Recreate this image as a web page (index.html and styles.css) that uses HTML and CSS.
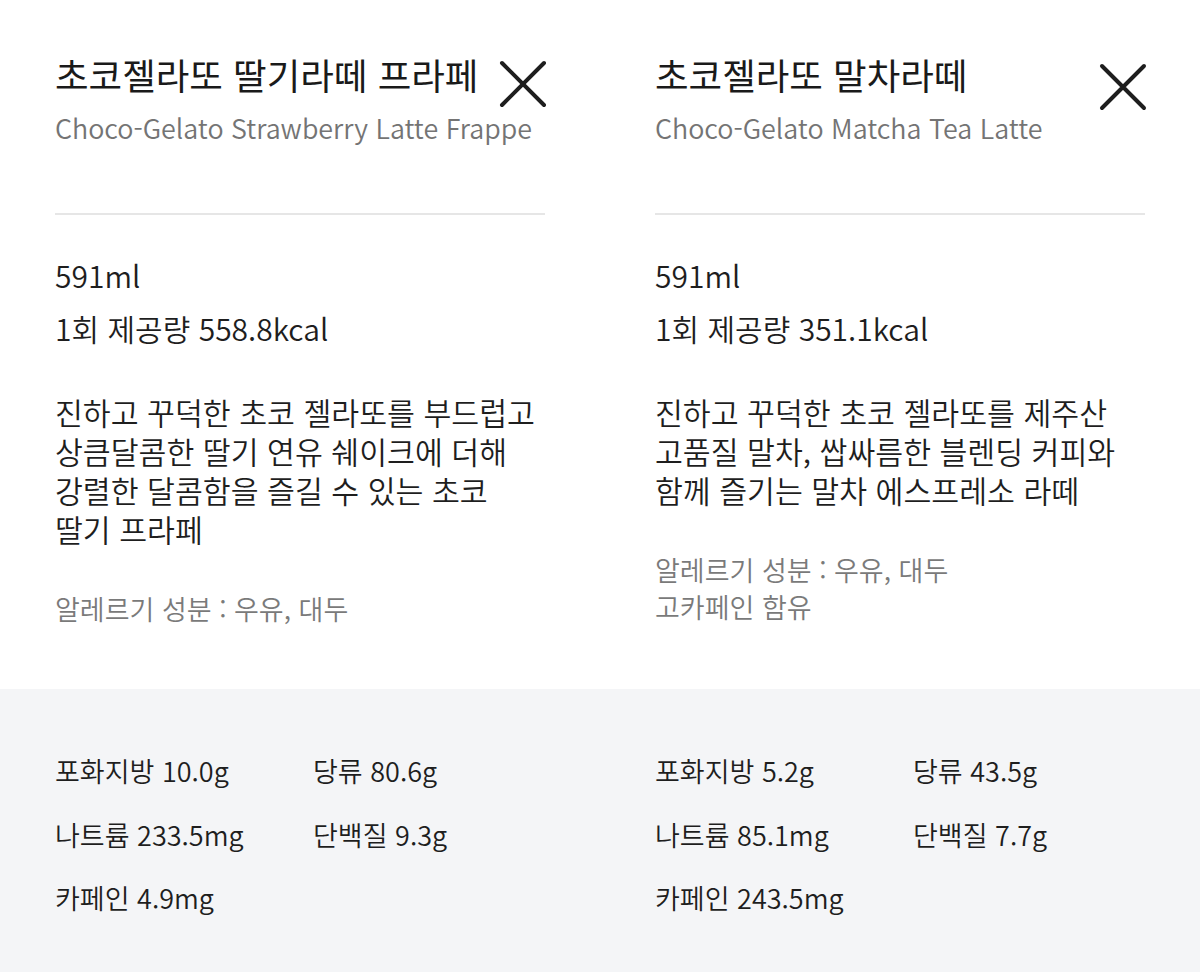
FILE: index.html
```html
<!DOCTYPE html>
<html lang="ko">
<head>
<meta charset="utf-8">
<link rel="stylesheet" href="styles.css">
</head>
<body>
<div class="page">
  <section class="panel">
    <header class="head">
      <h1 class="title">초코젤라또 딸기라떼 프라페</h1>
      <button class="close" aria-label="닫기">
        <svg viewBox="0 0 48 48" width="48" height="48"><path d="M3 3 L45 45 M45 3 L3 45" stroke="#1e1e1e" stroke-width="4" stroke-linecap="round" fill="none"/></svg>
      </button>
      <p class="subtitle">Choco-Gelato Strawberry Latte Frappe</p>
    </header>
    <hr class="divider">
    <div class="specs">
      <p>591ml</p>
      <p>1회 제공량 558.8kcal</p>
    </div>
    <p class="desc">진하고 꾸덕한 초코 젤라또를 부드럽고<br>상큼달콤한 딸기 연유 쉐이크에 더해<br>강렬한 달콤함을 즐길 수 있는 초코<br>딸기 프라페</p>
    <div class="notes">
      <p>알레르기 성분 : 우유, 대두</p>
    </div>
  </section>
  <section class="panel">
    <header class="head">
      <h1 class="title">초코젤라또 말차라떼</h1>
      <button class="close close-low" aria-label="닫기">
        <svg viewBox="0 0 48 48" width="48" height="48"><path d="M3 3 L45 45 M45 3 L3 45" stroke="#1e1e1e" stroke-width="4" stroke-linecap="round" fill="none"/></svg>
      </button>
      <p class="subtitle">Choco-Gelato Matcha Tea Latte</p>
    </header>
    <hr class="divider">
    <div class="specs">
      <p>591ml</p>
      <p>1회 제공량 351.1kcal</p>
    </div>
    <p class="desc">진하고 꾸덕한 초코 젤라또를 제주산<br>고품질 말차, 쌉싸름한 블렌딩 커피와<br>함께 즐기는 말차 에스프레소 라떼</p>
    <div class="notes">
      <p>알레르기 성분 : 우유, 대두</p>
      <p>고카페인 함유</p>
    </div>
  </section>
  <section class="nutri">
    <ul class="facts">
      <li>포화지방 10.0g</li>
      <li>당류 80.6g</li>
      <li>나트륨 233.5mg</li>
      <li>단백질 9.3g</li>
      <li>카페인 4.9mg</li>
    </ul>
  </section>
  <section class="nutri">
    <ul class="facts">
      <li>포화지방 5.2g</li>
      <li>당류 43.5g</li>
      <li>나트륨 85.1mg</li>
      <li>단백질 7.7g</li>
      <li>카페인 243.5mg</li>
    </ul>
  </section>
</div>
</body>
</html>
```
FILE: styles.css
```css
* { box-sizing: border-box; }
html, body { margin: 0; padding: 0; background: #fff; }
body {
  font-family: "Noto Sans CJK KR DemiLight", "Noto Sans CJK KR Light", "Noto Sans CJK KR", "Noto Sans", sans-serif;
  font-weight: 300;
  color: #1e1e1e;
  width: 1200px;
  height: 972px;
  overflow: hidden;
}
p, h1, ul { margin: 0; padding: 0; }
.page {
  display: grid;
  grid-template-columns: 600px 600px;
  grid-template-rows: 689px 283px;
}
.panel {
  padding: 50px 55px 0 55px;
  display: flex;
  flex-direction: column;
}
.head {
  display: grid;
  grid-template-columns: 1fr auto;
  grid-template-rows: 50px auto;
  align-items: start;
}
.title {
  grid-column: 1;
  grid-row: 1;
  font-family: "Noto Sans CJK KR", "Noto Sans", sans-serif;
  font-size: 36.5px;
  font-weight: 400;
  line-height: 50px;
  color: #1a1a1a;
  white-space: nowrap;
}
.subtitle {
  grid-column: 1 / span 2;
  grid-row: 2;
  margin-top: 8px;
  font-size: 26.85px;
  line-height: 40px;
  color: #747474;
  white-space: nowrap;
}
.close {
  grid-column: 2;
  grid-row: 1;
  border: 0;
  background: none;
  padding: 0;
  margin: 10px -2px -20px 0;
  width: 48px;
  height: 48px;
  display: block;
}
.close svg { display: block; }
.close-low { margin-top: 13px; }
.divider {
  margin: 65px 0 0 0;
  border: 0;
  height: 2px;
  background: #e6e6e6;
}
.specs {
  margin-top: 34px;
  font-size: 30px;
  line-height: 53px;
}
.desc {
  margin-top: 38px;
  font-size: 30.3px;
  line-height: 39px;
}
.notes {
  margin-top: 41px;
  font-size: 27px;
  line-height: 37px;
  color: #7a7a7a;
}
.nutri {
  background: #f4f5f7;
  padding: 62px 55px 0 55px;
}
.facts {
  list-style: none;
  display: grid;
  grid-template-columns: 258px auto;
  grid-auto-rows: 63.5px;
  font-size: 27px;
  line-height: 40px;
  color: #1e1e1e;
}
```
